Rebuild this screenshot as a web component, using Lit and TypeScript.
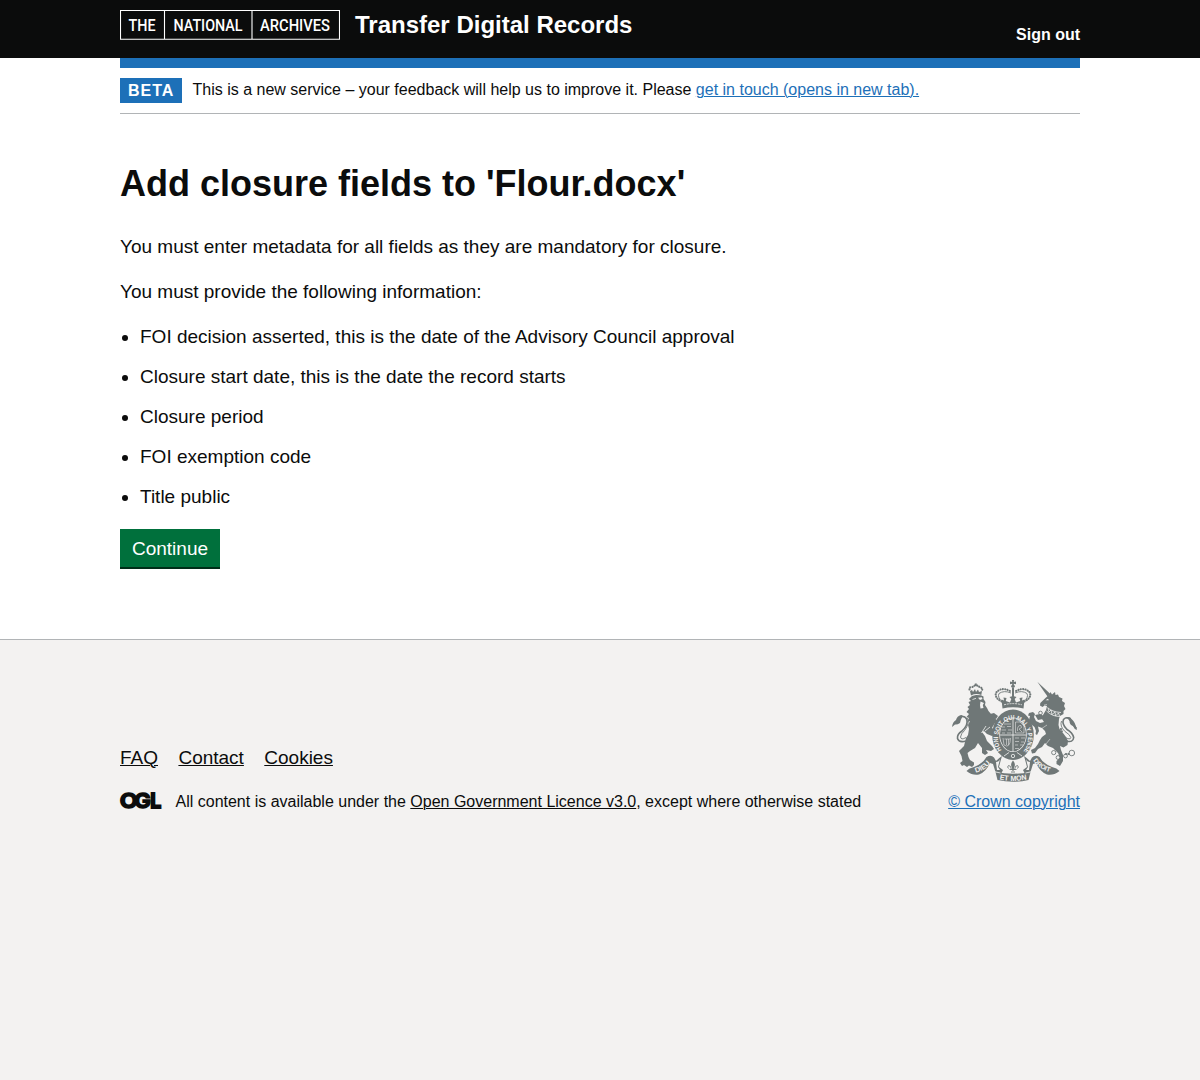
import { LitElement, html, css, svg } from "lit";
import { customElement } from "lit/decorators.js";

@customElement("royal-arms")
class RoyalArms extends LitElement {
  static styles = css`
    :host { display: block; }
    svg { display: block; width: 125px; height: 102px; overflow: visible; }
    .ink { fill: #6f7777; }
    .paper { fill: #f3f2f1; }
    .line { fill: none; stroke: #6f7777; stroke-width: 1.6; }
    .thin { fill: none; stroke: #6f7777; stroke-width: 0.9; }
    .cut { fill: none; stroke: #f3f2f1; stroke-width: 0.8; }
    .faint { fill: none; stroke: #f3f2f1; stroke-width: 0.7; opacity: 0.75; }
    .dots { fill: none; stroke: #6f7777; stroke-width: 2.1; stroke-linecap: round; stroke-dasharray: 0.1 2.3; }
    text { fill: #f3f2f1; font-family: "Liberation Sans", Arial, sans-serif; font-weight: 700; }
  `;

  private lion() {
    return svg`
      <path class="dots" d="M17.5 9.5 Q17 6.5 20.5 7 Q21.5 5.5 24 5.5 Q27 5.5 27.5 7.5 Q31 7.5 30 10.5"/>
      <path class="ink" d="M18 11 L20 10 L21 12 L23 9 L24 12 L26 9.5 L27 12 L30 11 L29.3 15 Q24 13 19 15.5Z M22.8 3.5 H24.8 V6 H22.8Z"/>
      <path class="ink" d="M18 18 L20 16 L24 15 L29 15.3 L31.5 16.5 L31.5 19 L33.5 22 L33 25 L35 28 L36.5 31 L39 34 L43 38 L45 41 L43 43 L41 46 L40 48 L43 50 L41.5 52 L43 54 L40 56 L35 54 L32 51 L30 52 L33 56 L35 61 L40 66 L42 69 L39 71 L34 70 L36 73 L33 75 L30 73 L30 68 L26 63 L23 68 L18 71 L15.5 73 L16.5 77 L18 80 L22 82.5 L22 85 L20 87 L17 85.5 L15 87 L12 85 L10 86 L8 83 L10.5 81 L9.5 76 L7 71 L9 69 L12 66 L13 62 L14 58 L16 55 L17 49 L16 45 L18 41 L15 42 L17 38 L14.5 37 L17 34 L14.5 32 L17 29 L15.5 27 L18 25 L16.5 22 L19 21 L17 19Z"/>
      <path class="paper" d="M26 17.8 L29.8 17.2 L30.5 19 L28 20Z M28.5 21.5 L32 23 L30.8 25 L31.5 28 L28.5 28.5 L28 25Z"/>
      <path class="cut" d="M20.5 19.5 L24 18.3 M29.5 53 L34 46 M33 51 L38 47"/>
      <path class="line" d="M14 61 Q7 63 5.5 58.5 Q5 54 10 51 Q16.5 45 14.8 39.5 Q13.5 36 10 36.5 Q6.5 38 6 42"/>
      <path class="thin" d="M14 57.5 Q9 60.5 8.5 57 Q9 53.5 12.5 50.5 Q18 43 15.5 38"/>
      <path class="ink" d="M0 47 Q.5 42 4 40 Q5 36 9 35 Q12 35.5 10 37.5 Q8.5 40 8 43 Q5 45 3 44.5 Q1 46 0 47Z"/>
      <path class="ink" d="M38 34 L42 33 L46 36 L44 39 L40 38Z"/>
    `;
  }

  private unicorn() {
    return svg`
      <path class="ink" d="M85.3 1.8 L98.4 14 L95.7 16.8Z"/>
      <path class="ink" d="M94 17.5 L97 15 L98.5 12 L100 14.5 L103 12 L103.5 15 L106 14.5 L107 17 L110.5 18.5 L110 21 L113 23 L112 26 L113.5 29 L111.5 31 L111.5 34 L108 36 L107 39 L106.5 45 L107.5 49 L111 53 L114 57 L116 61 L115.5 65 L111.5 67.5 L108 66 L109 70 L111 75 L111 81 L108 86 L104.5 84 L104.5 81 L108 78 L106 73 L101 68 L96 66 L93 63 L90 67 L86 69 L83 73 L80 73.5 L79 70 L83 68 L86 64 L88 60 L90 57 L94 54 L93 51 L90 48 L86 46.5 L87 51 L85 55 L83.5 54 L84 51 L82.5 47 L79 44 L77 40 L78 36 L76 35.5 L77 33 L81 32 L83 34 L82 37 L84 41 L88 43 L92 42 L90 39 L91 35 L94 30 L95 26 L92.5 25.5 L90.5 27 L88 25.5 L88.3 23Z"/>
      <path class="ink" d="M83 35 L88 34 L92 36 L91 39 L86 40Z"/>
      <path class="paper" d="M93.5 20.3 L96 18.8 L96.8 20.2Z"/>
      <path class="cut" d="M94.5 31 Q100 36.5 108 36.5 M95.5 27.5 Q100 32 109 32.5"/>
      <path class="cut" d="M96 28 L97 32 L99 30 L100 34.5 L103 32 L103.5 36 L106.5 33 L107.5 36"/>
      <path class="faint" d="M92 25 L95 24.5 M89 49 L95 45 M94 64 L98 59"/>
      <path class="line" d="M114.5 61 Q121 63 121.7 57.5 Q120.5 52.5 115 49.5 Q109.5 44 111.5 39.5 Q114 36.5 118 38.5 Q119 43 124.5 48.5"/>
      <path class="thin" d="M112.5 57 Q118.5 60.5 118.8 57.5 Q118 54.5 113 51.5 Q107.5 46 109.5 41"/>
      <path class="ink" d="M113 38 Q117 35.5 120 39.5 Q123 41.5 125 50 Q122 49 121 46 Q117.5 45 117.5 41 Q116 38 113 38Z"/>
      <circle class="thin" cx="101.7" cy="72.6" r="2.1"/>
      <circle class="thin" cx="106" cy="77.5" r="1.9"/>
      <circle class="thin" cx="113.5" cy="76" r="1.9"/>
      <circle class="thin" cx="119.8" cy="73" r="2.8"/>
      <circle class="thin" cx="88.5" cy="33" r="1.8"/>
      <path class="dots" d="M109 49 L110.5 53 M114 74 L117 74"/>
    `;
  }

  private crown() {
    return svg`
      <circle class="ink" cx="61" cy="6.3" r="1.8"/>
      <path class="ink" d="M60 0 H62 L61.8 2 L64 1.5 V4.3 L61.8 3.8 V6 H60.2 V3.8 L58 4.3 V1.5 L60.2 2Z M60 8 H62 V23 H60Z"/>
      <path class="dots" d="M49.5 21.5 Q42 17.5 44.2 12.5 Q49.5 6.5 58 11"/>
      <path class="dots" d="M72.5 21.5 Q80 17.5 77.8 12.5 Q72.5 6.5 64 11"/>
      <path class="thin" d="M50.5 22 Q45 17 47 13.5 Q52 10 59 13 M71.5 22 Q77 17 75 13.5 Q70 10 63 13"/>
      <path class="ink" d="M49.5 19.5 L52 20.5 L51.5 17.5 L54.5 18 L53.8 21 L58 22.5 L59.3 19 L57.5 17 L61 16 L64.5 17 L62.7 19 L64 22.5 L68.2 21 L67.5 18 L70.5 17.5 L70 20.5 L72.5 19.5 L71.5 28.5 Q61 26 50.5 28.5Z"/>
      <path class="cut" d="M52 24.8 Q61 22.4 70 24.8" stroke-dasharray="2 .8"/>
    `;
  }

  private shield() {
    return svg`
      <ellipse class="ink" cx="61" cy="54.8" rx="20.8" ry="25.2"/>
      <ellipse class="paper" cx="61" cy="54.8" rx="13.7" ry="17.3"/>
      <ellipse class="ink" cx="61" cy="54.8" rx="13" ry="16.6"/>
      <path id="motto" fill="none" d="M49.5 70 A14.9 18.6 0 1 1 72.5 70"/>
      <text font-size="6.6"><textPath href="#motto" textLength="79" lengthAdjust="spacingAndGlyphs">HONI SOIT QUI MAL Y PENSE</textPath></text>
      <path class="cut" d="M61 38 V72 M48 55 H74"/>
      <path class="faint" d="M52 44 H59 M50 47 H53 M55 46.5 H59 M49.5 50 H54 M56 50 H60 M50 53 H53 M55 53 H59 M63 58 H67 M69 58 H73 M63 61.5 H67 M69 62 H72 M63 65 H66 M68 65 H71 M63 68.5 H67"/>
      <path class="faint" d="M63.5 42 H68 L72 46 V53 H63.5Z M65.5 51 Q65 45 69 45.5 Q71 48 67 49 L70 52 M51 58 L52 65 Q58 69 58.5 58 M52.5 59 H58 M54.5 59 V65 M56.5 59 V65"/>
      <path class="cut" d="M52 76 L57 72.5 M70 76 L65 72.5"/>
      <circle class="cut" cx="61" cy="76" r="1.7"/>
    `;
  }

  private ribbon() {
    return svg`
      <path class="ink" d="M14.5 91 Q17 88 22 87 Q31 83.5 34.5 77 Q39 74.5 42 77.5 L44 81 Q47 78 50 76 Q48.5 81 47 87 L51 90 L49 94 L43.5 92 L41 84 L38 83 Q34 92 27 94.5 Q21 96 14.5 91Z"/>
      <path class="ink" d="M107.5 91 Q105 88 100 87 Q91 83.5 87.5 77 Q83 74.5 80 77.5 L78 81 Q75 78 72 76 Q73.5 81 75 87 L71 90 L73 94 L78.5 92 L81 84 L84 83 Q88 92 95 94.5 Q101 96 107.5 91Z"/>
      <path class="paper" d="M44 82 Q47 82 48 79 L46 87 L48 90 L45 90Z M78 82 Q75 82 74 79 L76 87 L74 90 L77 90Z"/>
      <path class="ink" d="M43.5 92 Q61 95.5 78.5 92 L76.5 100 Q61 103.5 45.5 100Z"/>
      <path class="cut" d="M43 91.8 L48.5 93 M79 91.8 L73.5 93"/>
      <path class="ink" d="M61 80.5 Q64.2 84 62 88 L61.5 91 H60.5 L60 88 Q57.8 84 61 80.5Z"/>
      <path class="thin" d="M59.5 90 Q59 85 56.5 85.5 Q54.8 87 56.5 88.5 M62.5 90 Q63 85 65.5 85.5 Q67.2 87 65.5 88.5 M57.5 89.5 H64.5 M59 92 H63"/>
      <path id="left" fill="none" d="M23.5 92.8 Q35 90 40 80.5"/>
      <path id="right" fill="none" d="M81 80.5 Q87 90 101 92.8"/>
      <path id="middle" fill="none" d="M47.5 99.4 Q61 102.2 76 99.4"/>
      <text font-size="7"><textPath href="#left" textLength="18" lengthAdjust="spacingAndGlyphs">DIEU</textPath></text>
      <text font-size="6.6"><textPath href="#right" textLength="21" lengthAdjust="spacingAndGlyphs">DROIT</textPath></text>
      <text font-size="7.4"><textPath href="#middle" textLength="27.5" lengthAdjust="spacingAndGlyphs">ET MON</textPath></text>
    `;
  }

  render() {
    return html`<svg viewBox="0 0 125 102" aria-hidden="true">
      ${this.lion()}${this.unicorn()}${this.crown()}${this.shield()}${this.ribbon()}
    </svg>`;
  }
}

@customElement("app-root")
class AppRoot extends LitElement {
  static styles = css`
    :host {
      display: flex;
      flex-direction: column;
      min-height: 100vh;
      font-family: "Liberation Sans", Arial, sans-serif;
      font-size: 19px;
      line-height: 25px;
      color: #0b0c0c;
      background: #fff;
    }
    .container { width: 960px; margin: 0 auto; }
    .header { background: #0b0c0c; color: #fff; height: 58px; }
    .header .container { display: flex; align-items: flex-start; height: 58px; }
    .logo { display: block; width: 220px; height: 30px; margin-top: 10px; }
    .service { font-size: 24px; line-height: 30px; font-weight: 700; margin: 10px 0 0 15px; }
    .signout { margin: 25px 0 0 auto; font-size: 16px; line-height: 20px; font-weight: 700; color: #fff; text-decoration: none; }
    .bar { height: 10px; background: #1d70b8; }
    .phase { display: flex; align-items: flex-start; box-sizing: border-box; height: 46px; padding-top: 10px; border-bottom: 1px solid #b1b4b6; font-size: 16px; line-height: 20px; }
    .tag { box-sizing: border-box; width: 62px; height: 25px; padding: 4px 0 0 8px; margin-right: 10.5px; background: #1d70b8; color: #fff; font-weight: 700; line-height: 17px; letter-spacing: 1px; }
    .phase p { margin: 2px 0 0; }
    a { color: inherit; text-underline-offset: 1px; text-decoration-thickness: 1px; }
    a.blue { color: #1d70b8; }
    .main { padding: 50px 0 70px; height: 405px; }
    h1 { margin: 0 0 30px; font-size: 36px; line-height: 40px; font-weight: 700; }
    .main p { margin: 0 0 20px; }
    ul { margin: 0 0 20px; padding-left: 20px; }
    li { margin-bottom: 15px; }
    li:last-child { margin-bottom: 0; }
    .button { display: block; box-sizing: border-box; width: 100px; height: 38px; margin: 0; border: 0; border-radius: 0; padding: 1px 0 0; background: #00703c; color: #fff; box-shadow: 0 2px 0 #002d18; font: 19px/19px "Liberation Sans", Arial, sans-serif; }
    .footer { flex: 1; border-top: 1px solid #b1b4b6; background: #f3f2f1; }
    .footer .container { display: flex; justify-content: space-between; align-items: flex-end; padding-top: 40px; }
    .links { display: flex; gap: 20.4px; margin-bottom: 22px; }
    .licence { display: flex; align-items: flex-start; height: 20px; font-size: 16px; line-height: 20px; }
    .ogl { width: 41px; height: 17px; margin-right: 14.5px; overflow: visible; }
    .rights { display: flex; flex-direction: column; font-size: 16px; line-height: 20px; }
    .rights royal-arms { margin: 0 0 10px 4px; }
  `;

  render() {
    return html`
      <header class="header">
        <div class="container">
          <svg class="logo" viewBox="0 0 220 30" role="img" aria-label="The National Archives">
            <path d="M.5 .5H219.5V29.2H.5Z M44.5 .5V29 M132 .5V29" fill="none" stroke="#fff" stroke-width="1.1"/>
            <g fill="#fff" font-family="Roboto, sans-serif" font-size="16" font-weight="500">
              <text x="8.5" y="21" textLength="27" lengthAdjust="spacingAndGlyphs">THE</text>
              <text x="53.5" y="21" textLength="69" lengthAdjust="spacingAndGlyphs">NATIONAL</text>
              <text x="140" y="21" textLength="70" lengthAdjust="spacingAndGlyphs">ARCHIVES</text>
            </g>
          </svg>
          <span class="service">Transfer Digital Records</span>
          <a class="signout" href="#">Sign out</a>
        </div>
      </header>
      <div class="container">
        <div class="bar"></div>
        <div class="phase">
          <strong class="tag">BETA</strong>
          <p>This is a new service – your feedback will help us to improve it. Please <a class="blue" href="#">get in touch (opens in new tab).</a></p>
        </div>
        <main class="main">
          <h1>Add closure fields to 'Flour.docx'</h1>
          <p>You must enter metadata for all fields as they are mandatory for closure.</p>
          <p>You must provide the following information:</p>
          <ul>
            <li>FOI decision asserted, this is the date of the Advisory Council approval</li>
            <li>Closure start date, this is the date the record starts</li>
            <li>Closure period</li>
            <li>FOI exemption code</li>
            <li>Title public</li>
          </ul>
          <button class="button">Continue</button>
        </main>
      </div>
      <footer class="footer">
        <div class="container">
          <div>
            <nav class="links"><a href="#">FAQ</a><a href="#">Contact</a><a href="#">Cookies</a></nav>
            <div class="licence">
              <svg class="ogl" viewBox="0 0 41 17" aria-hidden="true">
                <g fill="#0b0c0c" stroke="#0b0c0c" stroke-width="1.4" font-family="Inter, sans-serif" font-size="20.5" font-weight="700">
                  <text x="-.3" y="15.9" textLength="18" lengthAdjust="spacingAndGlyphs">O</text>
                  <text x="14.3" y="15.9" textLength="16.6" lengthAdjust="spacingAndGlyphs">G</text>
                  <text x="30.2" y="15.9" textLength="11" lengthAdjust="spacingAndGlyphs" stroke-width="1.8">L</text>
                </g>
              </svg>
              <span>All content is available under the <a href="#">Open Government Licence v3.0</a>, except where otherwise stated</span>
            </div>
          </div>
          <div class="rights">
            <royal-arms></royal-arms>
            <a class="blue" href="#">© Crown copyright</a>
          </div>
        </div>
      </footer>
    `;
  }
}
